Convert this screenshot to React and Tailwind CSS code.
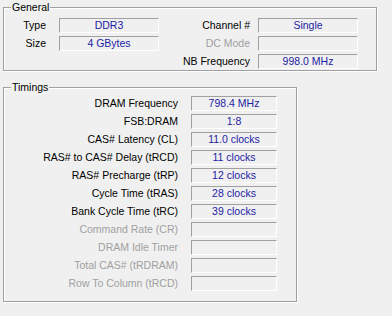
import React from 'react';

const font = { fontFamily: 'Tahoma, "Liberation Sans", Arial, sans-serif' };

function Box({ children }) {
  return (
    <div className="h-[15px] border-t border-l border-t-[#a0a0a0] border-l-[#a0a0a0] border-b border-r border-b-white border-r-white text-center leading-[13px] text-[#1c1ca4]">
      {children}
    </div>
  );
}

function Label({ children, disabled, pr = 'pr-[13px]' }) {
  return (
    <div className={`h-[15px] leading-[15px] text-right whitespace-nowrap ${pr} ${disabled ? 'text-[#a0a0a0]' : 'text-black'}`}>
      {children}
    </div>
  );
}

function Group({ title, className, children }) {
  return (
    <div className={`relative border border-[#a0a0a0] shadow-[inset_1px_1px_0_#fff,1px_1px_0_#fff] ${className}`}>
      <span className="absolute top-[-8px] left-[7px] px-px bg-[#f0f0f0] leading-[15px] text-black">{title}</span>
      {children}
    </div>
  );
}

const timings = [
  ['DRAM Frequency', '798.4 MHz'],
  ['FSB:DRAM', '1:8'],
  ['CAS# Latency (CL)', '11.0 clocks'],
  ['RAS# to CAS# Delay (tRCD)', '11 clocks'],
  ['RAS# Precharge (tRP)', '12 clocks'],
  ['Cycle Time (tRAS)', '28 clocks'],
  ['Bank Cycle Time (tRC)', '39 clocks'],
  ['Command Rate (CR)', '', true],
  ['DRAM Idle Timer', '', true],
  ['Total CAS# (tRDRAM)', '', true],
  ['Row To Column (tRCD)', '', true],
];

export default function App() {
  return (
    <div className="w-[392px] h-[316px] bg-[#f0f0f0] text-[10.5px] pt-[7px] pl-[3px] overflow-hidden" style={font}>
      <Group title="General" className="w-[374px] h-[64px] pt-[10px]">
        <div className="grid grid-cols-[55px_100px_99px_100px] gap-y-[3px]">
          <Label>Type</Label>
          <Box>DDR3</Box>
          <Label pr="pr-[8px]">Channel #</Label>
          <Box>Single</Box>

          <Label>Size</Label>
          <Box>4 GBytes</Box>
          <Label pr="pr-[8px]" disabled>DC Mode</Label>
          <Box></Box>

          <div />
          <div />
          <Label pr="pr-[8px]">NB Frequency</Label>
          <Box>998.0 MHz</Box>
        </div>
      </Group>

      <Group title="Timings" className="mt-[16px] w-[294px] h-[215px] pt-[8px]">
        <div className="grid grid-cols-[187px_86px] gap-y-[3px]">
          {timings.map(([label, value, disabled]) => (
            <React.Fragment key={label}>
              <Label disabled={disabled}>{label}</Label>
              <Box>{value}</Box>
            </React.Fragment>
          ))}
        </div>
      </Group>
    </div>
  );
}
